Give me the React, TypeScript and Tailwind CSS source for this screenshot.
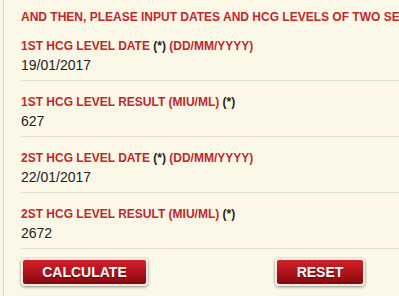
const fields = [
  { label: "1ST HCG LEVEL DATE", extra: "(DD/MM/YYYY)", value: "19/01/2017" },
  { label: "1ST HCG LEVEL RESULT", extra: "(MIU/ML)", value: "627", after: true },
  { label: "2ST HCG LEVEL DATE", extra: "(DD/MM/YYYY)", value: "22/01/2017" },
  { label: "2ST HCG LEVEL RESULT", extra: "(MIU/ML)", value: "2672", after: true },
];

function Field({ label, extra, value, after }: { label: string; extra: string; value: string; after?: boolean }) {
  return (
    <div className="mt-[14px] border-b border-[#e6e0cc] pb-[7px] first:mt-[15px]">
      <div className="whitespace-nowrap text-[12px] font-bold leading-[14px] text-[#c1272d]">
        {label}{" "}
        {after ? (
          <>
            {extra} <span className="text-[#222]">(*)</span>
          </>
        ) : (
          <>
            <span className="text-[#222]">(*)</span> {extra}
          </>
        )}
      </div>
      <div className="mt-[4px] text-[14px] leading-[16px] text-[#222]">{value}</div>
    </div>
  );
}

function Button({ children, className }: { children: string; className: string }) {
  return (
    <button
      className={`h-[28px] rounded-[4px] border-2 border-[#f4ece4] bg-gradient-to-b from-[#d0212a] via-[#b3121a] to-[#820a0e] text-[14px] font-bold text-white shadow-[0_1px_3px_rgba(0,0,0,0.45)] [text-shadow:0_1px_1px_rgba(0,0,0,0.4)] ${className}`}
    >
      {children}
    </button>
  );
}

export default function App() {
  return (
    <div className="h-[296px] w-[399px] overflow-hidden bg-[#fcf8e8] pl-[3px] font-['Liberation_Sans',Arial,sans-serif]">
      <div className="h-full border-l border-[#dcd6c0] pl-[17px] pt-[10px]">
        <h2 className="whitespace-nowrap text-[12px] font-bold leading-[14px] text-[#c1272d]">
          AND THEN, PLEASE INPUT DATES AND HCG LEVELS OF TWO SERUM SAMPLES
        </h2>
        <div className="flex flex-col">
          {fields.map((f) => (
            <Field key={f.label} {...f} />
          ))}
        </div>
        <div className="mt-[9px] flex">
          <Button className="w-[127px]">CALCULATE</Button>
          <Button className="ml-[127px] w-[90px]">RESET</Button>
        </div>
      </div>
    </div>
  );
}
